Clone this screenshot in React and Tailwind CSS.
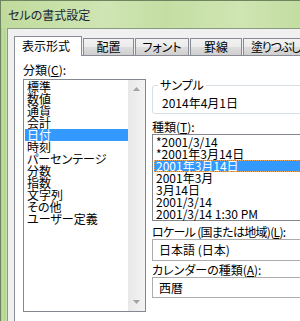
const categories = ['標準', '数値', '通貨', '会計', '日付', '時刻', 'パーセンテージ', '分数', '指数', '文字列', 'その他', 'ユーザー定義'];
const kinds = ['*2001/3/14', '*2001年3月14日', '2001年3月14日', '2001年3月', '3月14日', '2001/3/14', '2001/3/14 1:30 PM'];
const tabs = [
  { label: '配置', w: 'w-[51px] justify-center' },
  { label: 'フォント', w: 'w-[54px] justify-center' },
  { label: '罫線', w: 'w-[52px] justify-center' },
  { label: '塗りつぶし', w: 'w-[62px] pl-[7px] tracking-[-1.2px]' },
];

function Arrow({ down }) {
  return (
    <svg width="7" height="4" viewBox="0 0 7 4" className={down ? 'rotate-180' : ''}>
      <path d="M3.5 0L7 4H0z" fill="#a3a3a3" />
    </svg>
  );
}

export default function App() {
  return (
    <div className="w-[300px] h-[321px] overflow-hidden flex flex-col border-t border-l border-[#6f8560] bg-[#b7d594] font-['Noto_Sans_CJK_JP',sans-serif] text-[12px] leading-[12px] text-black">
      {/* title bar */}
      <div className="h-[27px] shrink-0 flex items-center pl-[7px] bg-[linear-gradient(90deg,#c0db9c,#cfe5b4_35%,#c4dea2_55%,#cfe5b3_80%,#c3dda0)]">
        <span className="text-[12px] leading-[16px] text-[#1a2433] [font-feature-settings:'palt']">セルの書式設定</span>
      </div>

      <div className="flex-1 flex min-h-0">
        {/* window frame */}
        <div className="w-[6px] shrink-0 bg-[linear-gradient(90deg,#a9cb80,#c6e0a6_30%,#b2d28c_60%,#cfe6b6)]" />

        {/* client area */}
        <div className="flex-1 bg-[#f0f0f0] border-t border-l border-[#8a9a82] pt-[7px] pl-[6px]">
          {/* tabs */}
          <div className="flex items-start h-[19px]">
            <div className="relative z-10 h-[20px] w-[68px] shrink-0 bg-white border-l border-t border-r border-[#898c95] pl-[7px] pt-[3px]">
              表示形式
            </div>
            {tabs.map((t) => (
              <div
                key={t.label}
                className={`${t.w} shrink-0 mt-[2px] h-[17px] ml-[1px] border-l border-t border-r border-[#898c95] bg-[linear-gradient(#f2f2f2,#ebebeb_50%,#dddddd_51%,#cfcfcf)] flex pt-[2px] whitespace-nowrap [font-feature-settings:'palt']`}
              >
                {t.label}
              </div>
            ))}
          </div>

          {/* panel */}
          <div className="h-[300px] bg-white border-l border-t border-[#898c95] pl-[8px] pt-[8px] flex">
            {/* left column */}
            <div className="w-[123px] shrink-0 flex flex-col">
              <div>分類(<span className="underline">C</span>):</div>
              <div className="mt-[3px] h-[233px] border border-[#828790] flex">
                <div className="flex-1 pt-[1px] pl-[1px] [font-feature-settings:'palt']">
                  {categories.map((c) => (
                    <div key={c} className={`h-[12px] pl-[2px] ${c === '日付' ? 'bg-[#3399ff] text-white' : ''}`}>
                      {c}
                    </div>
                  ))}
                </div>
                <div className="w-[17px] flex flex-col justify-between items-center bg-[linear-gradient(90deg,#e8e8e8,#f3f3f3)] py-[7px]">
                  <Arrow />
                  <Arrow down />
                </div>
              </div>
            </div>

            {/* right column */}
            <div className="w-[160px] shrink-0 ml-[6px] flex flex-col">
              <div className="relative mt-[21px] h-[29px] border border-[#d5dfe5] rounded-[3px] pl-[9px] pt-[11px]">
                <span className="absolute -top-[7px] left-[5px] bg-white px-[2px] [font-feature-settings:'palt']">サンプル</span>
                2014年4月1日
              </div>

              <div className="mt-[7px]">種類(<span className="underline">T</span>):</div>
              <div className="mt-[1px] h-[87px] border border-[#828790] pt-[1px] pl-[1px]">
                {kinds.map((k, i) => (
                  <div
                    key={i}
                    className={`h-[12px] pl-[2px] whitespace-nowrap ${i === 2 ? 'bg-[#3399ff] text-white outline outline-dotted outline-[#e8a65a] -outline-offset-1' : ''}`}
                  >
                    {k}
                  </div>
                ))}
              </div>

              <div className="mt-[5px] whitespace-nowrap tracking-[-0.7px] [font-feature-settings:'palt']">
                ロケール (国または地域)(<span className="underline">L</span>):
              </div>
              <div className="mt-[1px] h-[22px] border border-[#acacac] flex items-center pl-[6px]">日本語 (日本)</div>

              <div className="mt-[3px] whitespace-nowrap [font-feature-settings:'palt']">
                カレンダーの種類(<span className="underline">A</span>):
              </div>
              <div className="mt-[1px] h-[21px] border border-[#acacac] flex items-center pl-[6px]">西暦</div>
            </div>
          </div>
        </div>
      </div>
    </div>
  );
}
